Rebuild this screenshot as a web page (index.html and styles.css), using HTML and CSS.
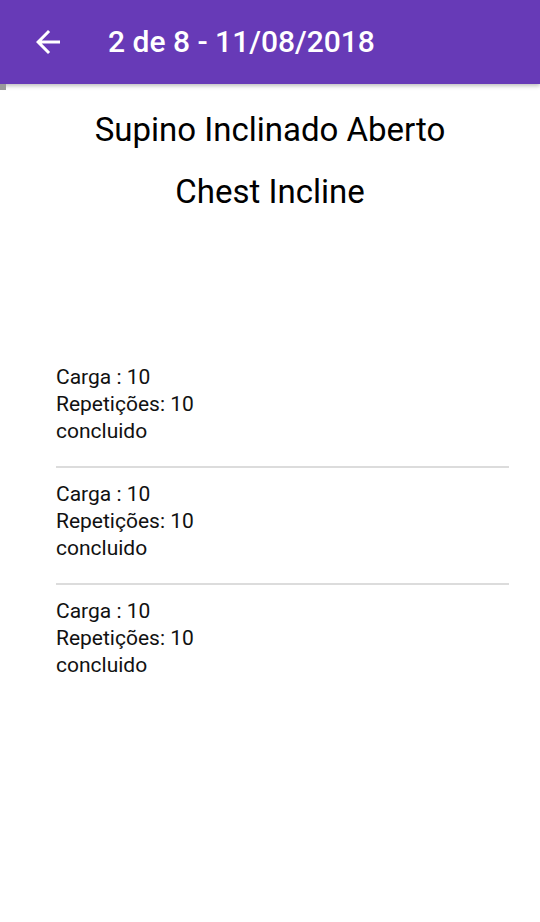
FILE: index.html
```html
<!DOCTYPE html>
<html lang="pt">
<head>
<meta charset="utf-8">
<title>2 de 8 - 11/08/2018</title>
<link rel="stylesheet" href="styles.css">
</head>
<body>
<header class="appbar">
  <svg class="back" viewBox="0 0 24 24" width="36" height="36"><path d="M20 11H7.83l5.59-5.59L12 4l-8 8 8 8 1.41-1.41L7.83 13H20v-2z" fill="#fff"/></svg>
  <h1 class="title">2 de 8 - 11/08/2018</h1>
  <div class="corner"></div>
</header>
<main class="content">
  <h2 class="heading">Supino Inclinado Aberto</h2>
  <h2 class="heading sub">Chest Incline</h2>
  <ul class="sets">
    <li class="set"><div>Carga : 10</div><div>Repetições: 10</div><div>concluido</div></li>
    <li class="set"><div>Carga : 10</div><div>Repetições: 10</div><div>concluido</div></li>
    <li class="set last"><div>Carga : 10</div><div>Repetições: 10</div><div>concluido</div></li>
  </ul>
</main>
</body>
</html>
```
FILE: styles.css
```css
html, body {
  margin: 0;
  padding: 0;
  background: #fff;
  font-family: Roboto, "Noto Sans", sans-serif;
}
.appbar {
  position: relative;
  height: 84px;
  background: #673ab7;
  display: flex;
  align-items: center;
  padding-left: 30px;
  box-shadow: 0 2px 4px rgba(0,0,0,0.25);
  z-index: 2;
}
.back {
  display: block;
  flex: none;
}
.title {
  margin: 0 0 0 42px;
  color: #fff;
  font-size: 30px;
  font-weight: 500;
  line-height: 34px;
}
.corner {
  position: absolute;
  left: 0;
  top: 84px;
  width: 6px;
  height: 6px;
  background: #9a9a9a;
}
.content {
  padding-top: 26px;
}
.heading {
  margin: 0;
  text-align: center;
  font-size: 33px;
  font-weight: 400;
  line-height: 39px;
  color: #000;
}
.heading.sub {
  margin-top: 23px;
}
.sets {
  list-style: none;
  margin: 140px 31px 0 56px;
  padding: 0;
}
.set {
  padding: 13px 0 21px;
  border-bottom: 2px solid #dcdcdc;
  font-size: 21px;
  line-height: 27px;
  color: #111;
}
.set.last {
  border-bottom: none;
}
```
